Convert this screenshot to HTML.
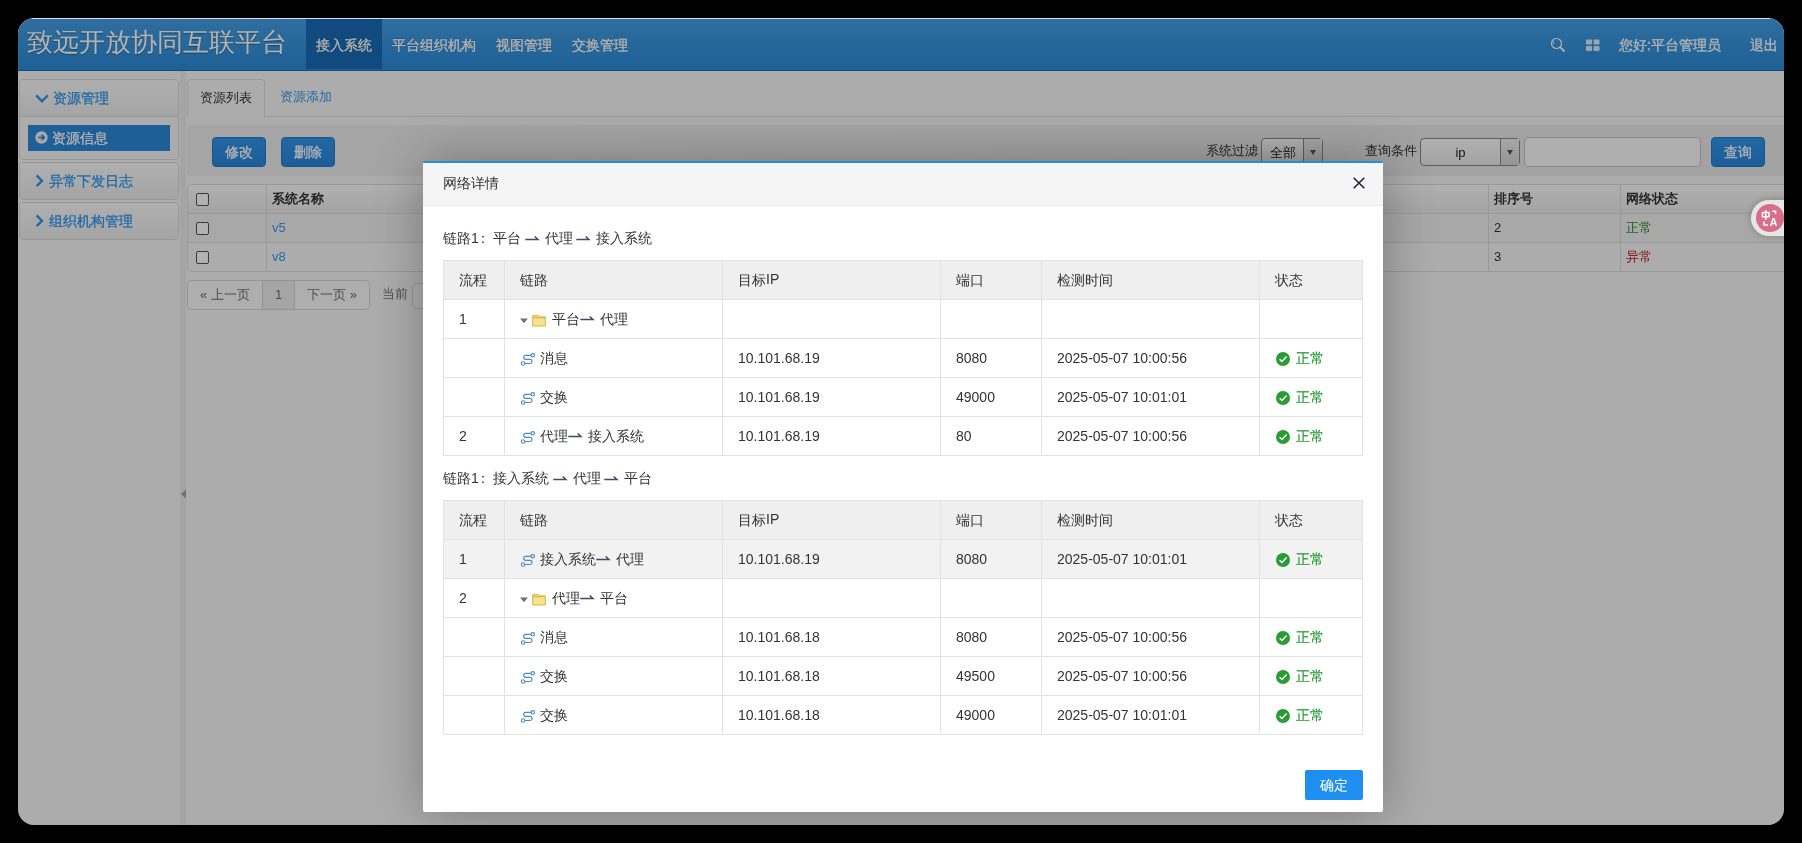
<!DOCTYPE html>
<html><head><meta charset="utf-8">
<style>
*{box-sizing:border-box}
html,body{margin:0;padding:0}
body{width:1802px;height:843px;background:#000;overflow:hidden;position:relative;font-family:"Liberation Sans",sans-serif;font-size:14px;color:#333}
svg{display:inline-block}
#screen{position:absolute;left:18px;top:18px;width:1766px;height:807px;border-radius:16px;overflow:hidden;background:#f7f7f7}
#hdr{position:absolute;left:0;top:0;width:1766px;height:53px;background:linear-gradient(#459ee3,#2b8bd9);border-bottom:1px solid #176dba}
#title{position:absolute;left:9px;top:7px;font-size:26px;line-height:34px;color:#fff;font-weight:300;text-shadow:0 1px 1px rgba(0,0,0,.35);white-space:nowrap}
.nav{position:absolute;top:1px;height:50px;line-height:52px;-webkit-text-stroke:0.3px #fff;color:#fff;font-size:14px;padding:0 10px;white-space:nowrap;text-shadow:0 -1px 0 rgba(0,0,0,.25)}
.nav.on{background:#176ab5}
.htxt{position:absolute;top:0;height:53px;line-height:54px;color:#fff;font-size:14px;white-space:nowrap;-webkit-text-stroke:0.3px #fff}
.hic{position:absolute}
.panel{position:absolute;left:1px;width:160px;border:1px solid #d8d8d8;border-radius:4px;background:#f7f7f7;overflow:hidden}
.ph{height:37px;background:linear-gradient(#fbfbfb,#ececec);color:#3399ee;line-height:37px;-webkit-text-stroke:0.3px #3399ee;padding-left:34px;font-size:14px;position:relative;white-space:nowrap}
.ph svg{position:absolute}
.act{position:absolute;left:8px;top:45px;width:142px;height:26px;background:#2b88d8;color:#fff;line-height:26px;-webkit-text-stroke:0.3px #fff;padding-left:25px;white-space:nowrap}
#split{position:absolute;left:162px;top:53px;width:6px;height:754px;background:#ebebeb}
.tab{position:absolute;top:61px;height:38px;line-height:36px;padding:0 12px;font-size:13px;white-space:nowrap}
.tab.on{left:169px;width:78px;border:1px solid #ddd;border-bottom-color:#f7f7f7;border-radius:4px 4px 0 0;background:#f7f7f7;color:#333}
#tabline{position:absolute;left:169px;top:98px;width:1597px;height:1px;background:#ddd}
#toolbar{position:absolute;left:169px;top:107px;width:1610px;height:51px;background:linear-gradient(90deg,#ececec,#e8e8e8);border-radius:4px}
.btn{position:absolute;top:119px;height:30px;line-height:28px;width:54px;text-align:center;color:#fff;border-radius:4px;background:linear-gradient(#2e95ec,#2a86da);border:1px solid #2478c4;font-size:14px;-webkit-text-stroke:0.3px #fff}
.lbl{position:absolute;top:124px;line-height:18px;color:#333;white-space:nowrap;font-size:13px}
.sel{position:absolute;top:120px;height:28px;border:1px solid #888;border-radius:4px;background:linear-gradient(#fdfdfd,#e9e9e9);color:#222;white-space:nowrap;font-size:13px}
.sel .v{position:absolute;left:0;top:0;height:26px;line-height:28px;text-align:center}
.sel .ar{position:absolute;top:0;height:26px;border-left:1px solid #888;background:linear-gradient(#f0f0f0,#d4d4d4)}
.sel .ar:after{content:"";position:absolute;left:5.5px;top:11px;border-left:3.5px solid transparent;border-right:3.5px solid transparent;border-top:5px solid #555}
#qin{position:absolute;left:1506px;top:119px;width:177px;height:30px;border:1px solid #c6c6c6;border-radius:4px;background:#fafafa}
#bgt{position:absolute;left:169px;top:166px;width:1610px;border:1px solid #dcdcdc;border-radius:4px;overflow:hidden;font-size:13px}
.br{position:absolute;left:0;width:1610px;height:29px;border-top:1px solid #dcdcdc}
.bc{position:absolute;top:0;height:28px;line-height:28px;border-left:1px solid #dcdcdc;padding-left:5px;white-space:nowrap}
.cb{position:absolute;left:8px;width:13px;height:13px;border:1px solid #555;border-radius:2px;background:#fff}
.lnk{color:#3399ee}
#pg{position:absolute;left:169px;top:262px;height:30px}
.pgi{position:absolute;top:0;height:30px;line-height:27px;border:1px solid #d6d6d6;background:#fafafa;color:#6f6f6f;text-align:center;font-size:13px;white-space:nowrap}
#mask{position:absolute;left:0;top:0;width:1766px;height:807px;background:rgba(0,0,0,.3)}
#tr{position:absolute;left:1733px;top:182px;width:40px;height:36px;border-radius:18px 0 0 18px;background:#e6e6e6;box-shadow:0 0 8px rgba(0,0,0,.25)}
#tr .pink{position:absolute;left:5px;top:4px;width:28px;height:28px;border-radius:50%;background:#d86d8c}
#tr svg{position:absolute;left:0;top:0}
#modal{position:absolute;left:405px;top:143px;width:960px;height:651px;background:#fff;border-top:2px solid #1e8ee6;box-shadow:1px 1px 50px rgba(0,0,0,.3);border-radius:2px}
#mh{height:43px;background:#f5f5f5;border-bottom:1px solid #e8e8e8;position:relative}
#mh .t{position:absolute;left:20px;top:0;line-height:40px;font-size:14px;color:#333}
#mh .x{position:absolute;left:930px;top:14px}
#mb{position:relative;height:606px}
.mt{position:absolute;left:20px;width:919px;border-collapse:collapse;table-layout:fixed}
.mt td,.mt th{border:1px solid #e2e2e2;height:39px;padding:0 0 0 15px;text-align:left;font-weight:normal;font-size:14px;color:#333;white-space:nowrap;vertical-align:middle}
.mt th{background:#efefef}
.mt tr.hov td{background:#f2f2f2}
.ri{vertical-align:-3.5px;margin-right:4px}
.fi{vertical-align:-4.5px;margin-right:4px}
.hp{vertical-align:1px}
.ck{vertical-align:-4px;margin-right:6px;margin-left:1px}
.chain{position:absolute;left:20px;font-size:14px;line-height:16px;color:#333;white-space:nowrap}
.chain .hp{margin:0}
.ok{color:#229a31;-webkit-text-stroke:0.15px #229a31}
#okbtn{position:absolute;left:882px;top:564px;width:58px;height:30px;line-height:30px;text-align:center;background:#1e8ef0;color:#fff;border-radius:2px;font-size:14px}
i.c{font-style:normal;position:relative;top:1px}
i.col{font-style:normal;position:relative;left:-3px}
#hl{position:absolute;left:14px;top:0;width:1738px;height:1px;background:rgba(255,255,255,.8)}
#modal,#screen{will-change:transform}

</style></head><body>
<div id="screen">
  <div id="hdr">
    <div id="title">致远开放协同互联平台</div>
    <div class="nav on" style="left:288px">接入系统</div>
    <div class="nav" style="left:364px">平台组织机构</div>
    <div class="nav" style="left:468px">视图管理</div>
    <div class="nav" style="left:544px">交换管理</div>
    <svg class="hic" style="left:1532px;top:19px" width="16" height="16" viewBox="0 0 16 16"><circle cx="6.5" cy="6.5" r="5" fill="none" stroke="#fff" stroke-width="1.2"/><path d="M10.2 10.2L14.5 14.5" stroke="#fff" stroke-width="1.8"/><path d="M4 4.3Q3.2 5.5 3.6 7.6" fill="none" stroke="#fff" stroke-width=".9"/></svg>
    <svg class="hic" style="left:1568px;top:20.5px" width="14" height="13" viewBox="0 0 14 13"><g fill="#fff" fill-opacity=".82"><rect x="0" y="0.5" width="6" height="5" rx="1"/><rect x="7.5" y="0.5" width="6" height="5" rx="1"/><rect x="0" y="7" width="6" height="5" rx="1"/><rect x="7.5" y="7" width="6" height="5" rx="1"/></g></svg>
    <div class="htxt" style="left:1601px">您好:平台管理员</div>
    <div class="htxt" style="left:1732px">退出</div>
  </div>
  <div class="panel" style="top:61px;height:81px">
    <div class="ph" style="border-bottom:1px solid #d9d9d9;padding-left:33px;line-height:36px"><svg style="left:14.5px;top:13.5px" width="14" height="10" viewBox="0 0 14 10"><path d="M1.2 1.4L7 7.2L12.8 1.4" fill="none" stroke="#3399ee" stroke-width="2.4"/></svg>资源管理</div>
    <div class="act" style="padding-left:24px"><svg style="position:absolute;left:7px;top:6px" width="13" height="13" viewBox="0 0 13 13"><circle cx="6.5" cy="6.5" r="6.2" fill="#f2f2f2"/><path d="M3 6.5H9M6.6 3.9L9.2 6.5L6.6 9.1" fill="none" stroke="#2f86d2" stroke-width="1.7"/></svg>资源信息</div>
  </div>
  <div class="panel" style="top:144px;height:38px">
    <div class="ph" style="padding-left:29px"><svg style="left:15px;top:11px" width="9" height="14" viewBox="0 0 9 14"><path d="M1.6 1.4L7 6.8L1.6 12.2" fill="none" stroke="#3399ee" stroke-width="2.4"/></svg>异常下发日志</div>
  </div>
  <div class="panel" style="top:184px;height:38px">
    <div class="ph" style="padding-left:29px"><svg style="left:15px;top:11px" width="9" height="14" viewBox="0 0 9 14"><path d="M1.6 1.4L7 6.8L1.6 12.2" fill="none" stroke="#3399ee" stroke-width="2.4"/></svg>组织机构管理</div>
  </div>
  <div id="split"><svg style="position:absolute;left:0px;top:418px" width="6" height="10" viewBox="0 0 6 10"><path d="M6 0.5L1 5L6 9.5Z" fill="#a3a3a3"/></svg></div>
  <div id="tabline"></div>
  <div class="tab on">资源列表</div>
  <div class="tab lnk" style="left:250px">资源添加</div>
  <div id="toolbar"></div>
  <div class="btn" style="left:194px">修改</div>
  <div class="btn" style="left:263px">删除</div>
  <div class="lbl" style="left:1188px">系统过滤</div>
  <div class="sel" style="left:1243px;width:62px"><div class="v" style="width:42px">全部</div><div class="ar" style="left:41px;width:19px"></div></div>
  <div class="lbl" style="left:1347px">查询条件</div>
  <div class="sel" style="left:1402px;width:100px"><div class="v" style="width:79px">ip</div><div class="ar" style="left:79px;width:19px"></div></div>
  <div id="qin"></div>
  <div class="btn" style="left:1693px">查询</div>
  <div id="bgt" style="height:88px">
    <div class="br" style="top:-1px;background:linear-gradient(#fbfbfb,#ececec);font-weight:bold"><div class="cb" style="top:8px"></div><div class="bc" style="left:78px">系统名称</div><div class="bc" style="left:1300px">排序号</div><div class="bc" style="left:1432px">网络状态</div></div>
    <div class="br" style="top:28px;background:#f1f1f1"><div class="cb" style="top:8px"></div><div class="bc lnk" style="left:78px">v5</div><div class="bc" style="left:1300px">2</div><div class="bc" style="left:1432px;color:#2a8a2a">正常</div></div>
    <div class="br" style="top:57px"><div class="cb" style="top:8px"></div><div class="bc lnk" style="left:78px">v8</div><div class="bc" style="left:1300px">3</div><div class="bc" style="left:1432px;color:#c02020">异常</div></div>
  </div>
  <div id="pg">
    <div class="pgi" style="left:0;width:76px;border-radius:4px 0 0 4px">« 上一页</div>
    <div class="pgi" style="left:75px;width:33px;background:#ececec">1</div>
    <div class="pgi" style="left:107px;width:76px;border-radius:0 4px 4px 0">下一页 »</div>
    <div class="pgi" style="left:182px;width:60px;border:0;background:none;color:#6f6f6f;text-align:left;padding-left:13px">当前</div>
    <div class="pgi" style="left:225px;top:3px;width:60px;height:26px;background:#fafafa;border-radius:4px"></div>
  </div>

  <div id="mask"></div>
  <div id="tr"><div class="pink"><svg width="28" height="28" viewBox="0 0 28 28"><g fill="none" stroke="#fff" stroke-width="1.6"><path d="M6.5 8.5h6.5v4.2h-6.5z M9.75 6.3v9.5"/><path d="M16.3 7.3h3.2v2.6"/><path d="M8 17.5v3.5h4"/></g><text x="13.6" y="22" fill="#fff" font-size="11" font-weight="bold" font-family="Liberation Sans">A</text></svg></div></div>
  <div id="modal">
    <div id="mh"><div class="t">网络详情</div><svg class="x" width="12" height="12" viewBox="0 0 12 12"><path d="M0.7 0.7L11.3 11.3M11.3 0.7L0.7 11.3" stroke="#1e1e2a" stroke-width="1.5"/></svg></div>
    <div id="mb">
      <div class="chain" style="top:24px">链路1<i class="col">：</i>平台 <svg class="hp" width="16" height="8" viewBox="0 0 16 8"><path d="M0.3 5.5H12.9L9.7 2.5" fill="none" stroke="#3d4b63" stroke-width="1.5"/></svg> 代理 <svg class="hp" width="16" height="8" viewBox="0 0 16 8"><path d="M0.3 5.5H12.9L9.7 2.5" fill="none" stroke="#3d4b63" stroke-width="1.5"/></svg> 接入系统</div>
      <table class="mt" style="top:54px"><colgroup><col style="width:61px"><col style="width:218px"><col style="width:218px"><col style="width:101px"><col style="width:218px"><col style="width:103px"></colgroup><tr><th><i class="c">流程</i></th><th><i class="c">链路</i></th><th><i class="c">目标</i>IP</th><th><i class="c">端口</i></th><th><i class="c">检测时间</i></th><th><i class="c">状态</i></th></tr><tr><td>1</td><td><svg class="fi" width="28" height="14" viewBox="0 0 28 14"><path d="M0.1 4.6H7.8L3.95 9.2Z" fill="#6e6e7a"/><path d="M12.7 1.6H18.4L19.4 2.9H25.4V12H12.7Z" fill="#f7e28e" stroke="#d9b648" stroke-width="1"/><path d="M12.7 3.6H25.4" stroke="#dcb94e" stroke-width="1.4"/></svg><i class="c">平台</i><svg class="hp" width="16" height="8" viewBox="0 0 16 8"><path d="M0.3 5.5H12.9L9.7 2.5" fill="none" stroke="#3d4b63" stroke-width="1.5"/></svg> <i class="c">代理</i></td><td></td><td></td><td></td><td></td></tr><tr><td></td><td><svg class="ri" width="16" height="14" viewBox="0 0 16 14"><g fill="none" stroke="#4a8cc2" stroke-width="1.15"><circle cx="12.8" cy="3.3" r="1.7"/><circle cx="3.1" cy="11.5" r="1.75"/><path d="M11.1 3.3H5.7A2.05 2.05 0 0 0 5.7 7.4H10A2.05 2.05 0 0 1 10 11.5H4.85"/></g></svg><i class="c">消息</i></td><td>10.101.68.19</td><td>8080</td><td>2025-05-07 10:00:56</td><td><svg class="ck" width="14" height="14" viewBox="0 0 14 14"><circle cx="7" cy="7" r="7" fill="#2a9c37"/><path d="M3.6 7.2L5.9 9.4L10.6 4.6" fill="none" stroke="#fff" stroke-width="1.4"/></svg><span class="ok"><i class="c">正常</i></span></td></tr><tr><td></td><td><svg class="ri" width="16" height="14" viewBox="0 0 16 14"><g fill="none" stroke="#4a8cc2" stroke-width="1.15"><circle cx="12.8" cy="3.3" r="1.7"/><circle cx="3.1" cy="11.5" r="1.75"/><path d="M11.1 3.3H5.7A2.05 2.05 0 0 0 5.7 7.4H10A2.05 2.05 0 0 1 10 11.5H4.85"/></g></svg><i class="c">交换</i></td><td>10.101.68.19</td><td>49000</td><td>2025-05-07 10:01:01</td><td><svg class="ck" width="14" height="14" viewBox="0 0 14 14"><circle cx="7" cy="7" r="7" fill="#2a9c37"/><path d="M3.6 7.2L5.9 9.4L10.6 4.6" fill="none" stroke="#fff" stroke-width="1.4"/></svg><span class="ok"><i class="c">正常</i></span></td></tr><tr><td>2</td><td><svg class="ri" width="16" height="14" viewBox="0 0 16 14"><g fill="none" stroke="#4a8cc2" stroke-width="1.15"><circle cx="12.8" cy="3.3" r="1.7"/><circle cx="3.1" cy="11.5" r="1.75"/><path d="M11.1 3.3H5.7A2.05 2.05 0 0 0 5.7 7.4H10A2.05 2.05 0 0 1 10 11.5H4.85"/></g></svg><i class="c">代理</i><svg class="hp" width="16" height="8" viewBox="0 0 16 8"><path d="M0.3 5.5H12.9L9.7 2.5" fill="none" stroke="#3d4b63" stroke-width="1.5"/></svg> <i class="c">接入系统</i></td><td>10.101.68.19</td><td>80</td><td>2025-05-07 10:00:56</td><td><svg class="ck" width="14" height="14" viewBox="0 0 14 14"><circle cx="7" cy="7" r="7" fill="#2a9c37"/><path d="M3.6 7.2L5.9 9.4L10.6 4.6" fill="none" stroke="#fff" stroke-width="1.4"/></svg><span class="ok"><i class="c">正常</i></span></td></tr></table>
      <div class="chain" style="top:264px">链路1<i class="col">：</i>接入系统 <svg class="hp" width="16" height="8" viewBox="0 0 16 8"><path d="M0.3 5.5H12.9L9.7 2.5" fill="none" stroke="#3d4b63" stroke-width="1.5"/></svg> 代理 <svg class="hp" width="16" height="8" viewBox="0 0 16 8"><path d="M0.3 5.5H12.9L9.7 2.5" fill="none" stroke="#3d4b63" stroke-width="1.5"/></svg> 平台</div>
      <table class="mt" style="top:294px"><colgroup><col style="width:61px"><col style="width:218px"><col style="width:218px"><col style="width:101px"><col style="width:218px"><col style="width:103px"></colgroup><tr><th><i class="c">流程</i></th><th><i class="c">链路</i></th><th><i class="c">目标</i>IP</th><th><i class="c">端口</i></th><th><i class="c">检测时间</i></th><th><i class="c">状态</i></th></tr><tr class="hov"><td>1</td><td><svg class="ri" width="16" height="14" viewBox="0 0 16 14"><g fill="none" stroke="#4a8cc2" stroke-width="1.15"><circle cx="12.8" cy="3.3" r="1.7"/><circle cx="3.1" cy="11.5" r="1.75"/><path d="M11.1 3.3H5.7A2.05 2.05 0 0 0 5.7 7.4H10A2.05 2.05 0 0 1 10 11.5H4.85"/></g></svg><i class="c">接入系统</i><svg class="hp" width="16" height="8" viewBox="0 0 16 8"><path d="M0.3 5.5H12.9L9.7 2.5" fill="none" stroke="#3d4b63" stroke-width="1.5"/></svg> <i class="c">代理</i></td><td>10.101.68.19</td><td>8080</td><td>2025-05-07 10:01:01</td><td><svg class="ck" width="14" height="14" viewBox="0 0 14 14"><circle cx="7" cy="7" r="7" fill="#2a9c37"/><path d="M3.6 7.2L5.9 9.4L10.6 4.6" fill="none" stroke="#fff" stroke-width="1.4"/></svg><span class="ok"><i class="c">正常</i></span></td></tr><tr><td>2</td><td><svg class="fi" width="28" height="14" viewBox="0 0 28 14"><path d="M0.1 4.6H7.8L3.95 9.2Z" fill="#6e6e7a"/><path d="M12.7 1.6H18.4L19.4 2.9H25.4V12H12.7Z" fill="#f7e28e" stroke="#d9b648" stroke-width="1"/><path d="M12.7 3.6H25.4" stroke="#dcb94e" stroke-width="1.4"/></svg><i class="c">代理</i><svg class="hp" width="16" height="8" viewBox="0 0 16 8"><path d="M0.3 5.5H12.9L9.7 2.5" fill="none" stroke="#3d4b63" stroke-width="1.5"/></svg> <i class="c">平台</i></td><td></td><td></td><td></td><td></td></tr><tr><td></td><td><svg class="ri" width="16" height="14" viewBox="0 0 16 14"><g fill="none" stroke="#4a8cc2" stroke-width="1.15"><circle cx="12.8" cy="3.3" r="1.7"/><circle cx="3.1" cy="11.5" r="1.75"/><path d="M11.1 3.3H5.7A2.05 2.05 0 0 0 5.7 7.4H10A2.05 2.05 0 0 1 10 11.5H4.85"/></g></svg><i class="c">消息</i></td><td>10.101.68.18</td><td>8080</td><td>2025-05-07 10:00:56</td><td><svg class="ck" width="14" height="14" viewBox="0 0 14 14"><circle cx="7" cy="7" r="7" fill="#2a9c37"/><path d="M3.6 7.2L5.9 9.4L10.6 4.6" fill="none" stroke="#fff" stroke-width="1.4"/></svg><span class="ok"><i class="c">正常</i></span></td></tr><tr><td></td><td><svg class="ri" width="16" height="14" viewBox="0 0 16 14"><g fill="none" stroke="#4a8cc2" stroke-width="1.15"><circle cx="12.8" cy="3.3" r="1.7"/><circle cx="3.1" cy="11.5" r="1.75"/><path d="M11.1 3.3H5.7A2.05 2.05 0 0 0 5.7 7.4H10A2.05 2.05 0 0 1 10 11.5H4.85"/></g></svg><i class="c">交换</i></td><td>10.101.68.18</td><td>49500</td><td>2025-05-07 10:00:56</td><td><svg class="ck" width="14" height="14" viewBox="0 0 14 14"><circle cx="7" cy="7" r="7" fill="#2a9c37"/><path d="M3.6 7.2L5.9 9.4L10.6 4.6" fill="none" stroke="#fff" stroke-width="1.4"/></svg><span class="ok"><i class="c">正常</i></span></td></tr><tr><td></td><td><svg class="ri" width="16" height="14" viewBox="0 0 16 14"><g fill="none" stroke="#4a8cc2" stroke-width="1.15"><circle cx="12.8" cy="3.3" r="1.7"/><circle cx="3.1" cy="11.5" r="1.75"/><path d="M11.1 3.3H5.7A2.05 2.05 0 0 0 5.7 7.4H10A2.05 2.05 0 0 1 10 11.5H4.85"/></g></svg><i class="c">交换</i></td><td>10.101.68.18</td><td>49000</td><td>2025-05-07 10:01:01</td><td><svg class="ck" width="14" height="14" viewBox="0 0 14 14"><circle cx="7" cy="7" r="7" fill="#2a9c37"/><path d="M3.6 7.2L5.9 9.4L10.6 4.6" fill="none" stroke="#fff" stroke-width="1.4"/></svg><span class="ok"><i class="c">正常</i></span></td></tr></table>
      <div id="okbtn">确定</div>
    </div>
  </div>
  <div id="hl"></div>
</div>
</body></html>
